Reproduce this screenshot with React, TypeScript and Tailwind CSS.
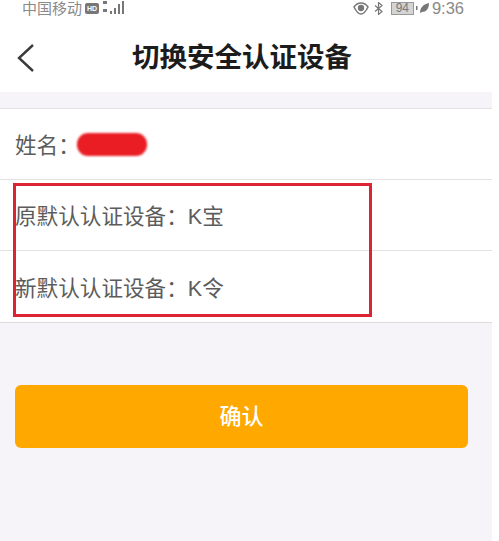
const cjk = "font-['Liberation_Sans','Noto_Sans_CJK_SC',sans-serif]";

function Row({ children, border = true }: { children: React.ReactNode; border?: boolean }) {
  return (
    <div className={`h-[71px] flex items-center pl-[15px] pt-[5px] text-[21.6px] text-[#5c5c5c] ${border ? "border-b border-[#e2e2e2]" : ""}`}>
      {children}
    </div>
  );
}

export default function App() {
  return (
    <div className={`w-[499px] h-[541px] bg-white overflow-hidden ${cjk}`}>
      <div className="relative w-[492px] h-[541px] flex flex-col bg-[#f6f3f9]">
        <div className="bg-white h-[92px] flex flex-col">
          <div className="h-[16px] flex items-center justify-between pl-[22px] pr-[28px] text-[#8a8a8a] text-[15px] leading-none">
            <div className="flex items-center gap-[3px]">
              <span>中国移动</span>
              <span className="w-[14px] h-[11px] rounded-[2px] bg-[#777] text-white text-[7px] font-bold flex items-center justify-center">HD</span>
              <svg width="24" height="14" viewBox="0 0 24 14" fill="#777">
                <rect x="1" y="0" width="4" height="3" />
                <rect x="1" y="8" width="4" height="3" />
                <rect x="8" y="10" width="2" height="3" />
                <rect x="12" y="7" width="2" height="6" />
                <rect x="16" y="3" width="2" height="10" />
                <rect x="20" y="0" width="2" height="13" />
              </svg>
            </div>
            <div className="flex items-center gap-[5px]">
              <svg width="16" height="13" viewBox="0 0 16 13" fill="none" stroke="#777" strokeWidth="1.5">
                <path d="M1 5c2-3 4-4 7-4s5 1 7 4c-2 4-4 7-7 7S3 9 1 5Z" />
                <circle cx="8" cy="6" r="2.4" fill="#777" />
              </svg>
              <svg width="9" height="13" viewBox="0 0 9 13" fill="none" stroke="#777" strokeWidth="1.2">
                <path d="M1 3.5 8 9.5 4.5 12.5V.5L8 3.5 1 9.5" />
              </svg>
              <span className="ml-[3px] w-[23px] h-[13px] border border-[#999] bg-[#d4d4d4] text-[12px] text-[#777] flex items-center justify-center">94</span>
              <svg width="14" height="12" viewBox="0 0 14 12" fill="#777" className="-ml-[3px]">
                <rect x="0" y="4" width="1.5" height="4" />
                <path d="M4 11C4 5 8 2 13 1c0 6-3 9-7 9l-2 1Z" />
              </svg>
              <span className="text-[16.5px] -ml-[3px]">9:36</span>
            </div>
          </div>
          <div className="relative flex-1 flex items-center justify-center">
            <svg className="absolute left-[16px] top-[27px]" width="19" height="30" viewBox="0 0 19 30" fill="none" stroke="#3a3a3a" strokeWidth="2.4">
              <path d="M17 2 3 15l14 13" />
            </svg>
            <span className="text-[#1c1c1c] text-[27.5px] font-bold leading-none pt-[8px] pr-[8px]">切换安全认证设备</span>
          </div>
        </div>
        <div className="h-[17px] border-b border-[#e2e0e6]" />
        <div className="bg-white border-b border-[#dcdcdc]">
          <Row>
            <span>姓名：</span>
            <span className="-ml-[3px] -mt-[5px] w-[70px] h-[23px] rounded-[11px] bg-[#ea1c24] blur-[1px]" />
          </Row>
          <Row><span>原默认认证设备：K宝</span></Row>
          <Row border={false}><span>新默认认证设备：K令</span></Row>
        </div>
        <div className="mt-[62px] ml-[15px] mr-[24px] h-[63px] rounded-[6px] bg-[#ffa800] text-white text-[22px] font-medium flex items-center justify-center">
          确认
        </div>
        <div className="absolute left-[13px] top-[183px] w-[359px] h-[134px] border-[3.5px] border-[#dc2434]" />
      </div>
    </div>
  );
}
